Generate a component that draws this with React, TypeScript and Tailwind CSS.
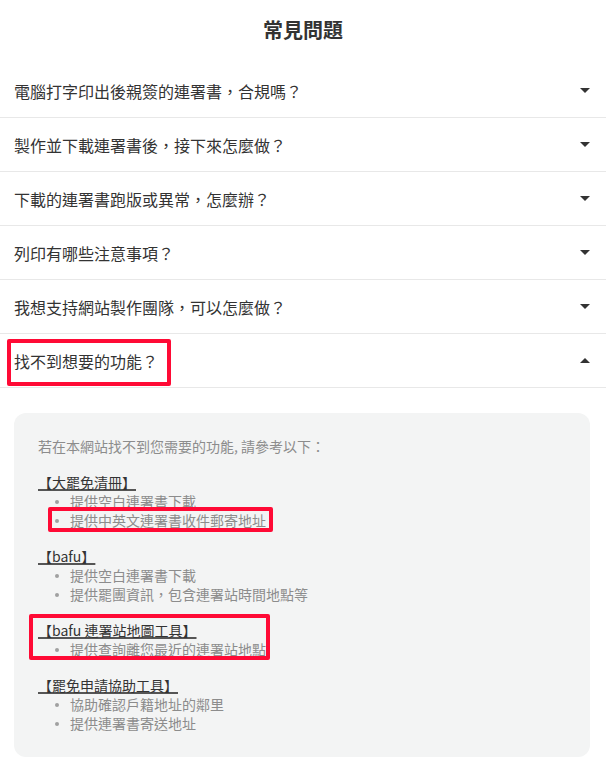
import React from "react";

const rows = [
  "電腦打字印出後親簽的連署書，合規嗎？",
  "製作並下載連署書後，接下來怎麼做？",
  "下載的連署書跑版或異常，怎麼辦？",
  "列印有哪些注意事項？",
  "我想支持網站製作團隊，可以怎麼做？",
];

function Caret({ up = false }: { up?: boolean }) {
  return (
    <svg width="10" height="5" viewBox="0 0 10 5" className="shrink-0">
      {up ? <path d="M0 5h10L5 0z" fill="#333" /> : <path d="M0 0h10L5 5z" fill="#333" />}
    </svg>
  );
}

function RedBox({ className }: { className: string }) {
  return (
    <span
      className={`pointer-events-none absolute rounded-[2px] border-[4px] border-[#ff0a35] ${className}`}
    />
  );
}

function Item({ children, box = false }: { children: React.ReactNode; box?: boolean }) {
  return (
    <li className="relative flex items-center">
      <span className="flex w-8 shrink-0 justify-end pr-[11px]">
        <span className="h-[4px] w-[4px] rounded-full bg-[#a0a0a0]" />
      </span>
      <span>{children}</span>
      {box && <RedBox className="left-[10px] top-[-4px] h-[25px] w-[225px]" />}
    </li>
  );
}

function Heading({ children }: { children: React.ReactNode }) {
  return (
    <div>
      <a className="text-[#333] underline decoration-[#555] decoration-[1.5px] underline-offset-[1px]">
        {children}
      </a>
    </div>
  );
}

export default function App() {
  return (
    <div className="w-[606px] bg-white font-['Noto_Sans_CJK_TC',sans-serif] text-[#333]">
      <div className="flex h-[64px] justify-center pt-[18px]">
        <h1 className="text-[20px] font-bold leading-[24px] text-[#333]">常見問題</h1>
      </div>

      {rows.map((r) => (
        <div
          key={r}
          className="flex h-[54px] items-center justify-between border-b border-[#e8e8e8] pl-[14px] pr-[16px]"
        >
          <span className="text-[16px] leading-[20px]">{r}</span>
          <Caret />
        </div>
      ))}

      <div className="relative flex h-[54px] items-center justify-between border-b border-[#e8e8e8] pl-[14px] pr-[16px]">
        <span className="text-[16px] leading-[20px]">找不到想要的功能？</span>
        <Caret up />
        <RedBox className="left-[7px] top-[5px] h-[47px] w-[164px]" />
      </div>

      <div className="mx-[14px] mt-[25px] w-[576px] rounded-xl bg-[#f3f4f4] px-6 py-6 text-[14px] leading-[19px] text-[#8c8c8c]">
        <p className="mb-[17px]">若在本網站找不到您需要的功能, 請參考以下：</p>

        <div className="mb-[17px]">
          <Heading>【大罷免清冊】</Heading>
          <ul>
            <Item>提供空白連署書下載</Item>
            <Item box>提供中英文連署書收件郵寄地址</Item>
          </ul>
        </div>

        <div className="mb-[17px]">
          <Heading>【bafu】</Heading>
          <ul>
            <Item>提供空白連署書下載</Item>
            <Item>提供罷團資訊，包含連署站時間地點等</Item>
          </ul>
        </div>

        <div className="relative mb-[17px]">
          <Heading>【bafu 連署站地圖工具】</Heading>
          <ul>
            <Item>提供查詢離您最近的連署站地點</Item>
          </ul>
          <RedBox className="left-[-9px] top-[-7px] h-[46px] w-[241px]" />
        </div>

        <div>
          <Heading>【罷免申請協助工具】</Heading>
          <ul>
            <Item>協助確認戶籍地址的鄰里</Item>
            <Item>提供連署書寄送地址</Item>
          </ul>
        </div>
      </div>
    </div>
  );
}
